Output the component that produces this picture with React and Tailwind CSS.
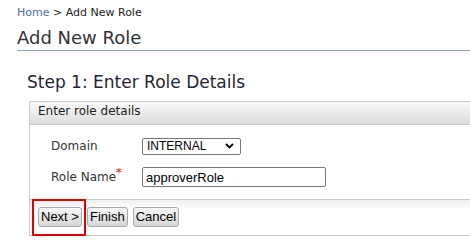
import React from 'react'

const dejavu = { fontFamily: '"DejaVu Sans", Verdana, sans-serif' }
const arial = { fontFamily: '"Liberation Sans", Arial, sans-serif' }

const Button = ({ children }) => (
  <button
    type="button"
    style={arial}
    className="h-[20px] px-[2px] text-[13px] leading-[18px] text-black border border-[#a9a9a9] rounded-[3px] bg-gradient-to-b from-[#f8f8f8] to-[#d6d6d6]"
  >
    {children}
  </button>
)

const App = () => {
  return (
    <div style={dejavu} className="w-[470px] h-[248px] overflow-hidden bg-white">
      {/* Breadcrumb */}
      <div className="pl-[17px] pt-[5px] text-[11px] leading-[16px] text-[#222]">
        <a href="#" className="text-[#4a6fa5]">Home</a>
        <span> &gt; Add New Role</span>
      </div>

      <h1 className="ml-[17px] mt-[5px] text-[18px] leading-[24px] text-[#333] border-b border-[#86a1cf]">
        Add New Role
      </h1>

      <h2 className="ml-[27px] mt-[20px] text-[17px] leading-[22px] text-[#1f2633]">
        Step 1: Enter Role Details
      </h2>

      {/* Panel */}
      <div className="ml-[29px] mt-[8px] w-[460px] border border-[#c8c8c8]">
        <div className="pl-[8px] pt-[1px] pb-[5px] text-[12px] leading-[16px] text-[#222] border-b border-[#c8c8c8] bg-gradient-to-b from-[#f8f8f8] to-[#dddddd]">
          Enter role details
        </div>

        <div className="pl-[21px] pt-[9px] pb-[10px] flex flex-col gap-[7px] text-[12px] text-[#333]">
          <div className="flex items-center h-[24px]">
            <span className="w-[91px] leading-[24px]">Domain</span>
            <div
              style={arial}
              className="w-[99px] h-[17px] flex items-center justify-between pl-[4px] pr-[6px] border border-[#767676] rounded-[2px] text-[12px] leading-[15px] text-black bg-white"
            >
              <span>INTERNAL</span>
              <svg width="9" height="6" viewBox="0 0 9 6">
                <path d="M1 1 L4.5 4.5 L8 1" fill="none" stroke="#000" strokeWidth="1.8" />
              </svg>
            </div>
          </div>
          <div className="flex items-center h-[24px]">
            <span className="w-[91px] leading-[24px]">
              Role Name<sup className="text-[#ee3b3b] text-[11px] font-bold">*</sup>
            </span>
            <input
              style={arial}
              defaultValue="approverRole"
              className="w-[184px] h-[20px] pl-[3px] border border-[#767676] rounded-[2px] text-[13px] text-black outline-none"
            />
          </div>
        </div>

        {/* Footer buttons */}
        <div className="relative border-t border-[#c8c8c8] bg-gradient-to-b from-[#f0f0f0] to-white to-[30%] pl-[8px] pt-[7px] pb-[8px] flex gap-[5px]">
          <Button>Next &gt;</Button>
          <Button>Finish</Button>
          <Button>Cancel</Button>
          <div className="absolute left-[2px] top-[-1px] w-[54px] h-[37px] border-2 border-[#e00000]" />
        </div>
      </div>
    </div>
  )
}

export default App
